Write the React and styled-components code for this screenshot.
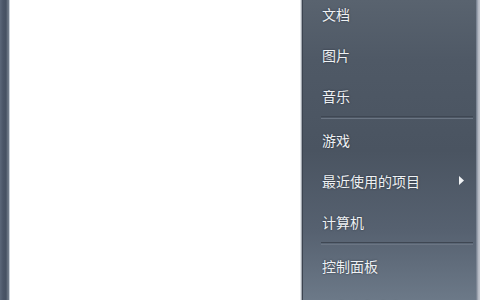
import React from "react";
import styled, { createGlobalStyle } from "styled-components";

const Global = createGlobalStyle`
  html, body { margin: 0; padding: 0; width: 480px; height: 300px; overflow: hidden; background: #ffffff; }
  #root { width: 480px; height: 300px; }
`;

const Frame = styled.div`
  display: flex;
  width: 480px;
  height: 300px;
  overflow: hidden;
`;

const LeftStrip = styled.div`
  width: 9px;
  flex: none;
  background: linear-gradient(90deg, #5b6779 0px, #4b5668 3px, #465162 6px, #6f7a88 8px);
  border-right: 1px solid #c9d0d8;
`;

const WhitePanel = styled.div`
  flex: 1;
  background: #ffffff;
  border-right: 1px solid #a3a9b1;
  box-shadow: inset -1px 0 0 #e4e7ea;
`;

const DarkPanel = styled.div`
  width: 173px;
  flex: none;
  border-left: 1px solid #3c4450;
  background: linear-gradient(180deg, #59636f 0px, #4f5966 60px, #4a5461 150px, #566170 230px, #6c7988 300px);
  overflow: hidden;
`;

const RightEdge = styled.div`
  width: 4px;
  flex: none;
  background: linear-gradient(90deg, #6e7888 0px, #8a93a0 1px, #aab0bb 2px, #bfc3cc 3px);
`;

const Menu = styled.ul`
  list-style: none;
  margin: -7px 0 0 0;
  padding: 0;
`;

const Item = styled.li`
  height: 41px;
  display: flex;
  align-items: center;
  justify-content: space-between;
  padding: 0 12px 0 19px;
  font-family: "Noto Sans CJK SC", "Noto Sans", sans-serif;
  font-size: 14px;
  color: #eef1f4;
  text-shadow: 0 0 2px rgba(20, 26, 34, 0.7);
  white-space: nowrap;
`;

const Separator = styled.li`
  height: 3px;
  margin: 0 3px 0 18px;
  box-sizing: border-box;
  border-top: 1px solid #3f4753;
  border-bottom: 1px solid #6b7583;
`;

const Arrow = () => (
  <svg width="5" height="9" viewBox="0 0 5 9">
    <path d="M0 0 L5 4.5 L0 9 Z" fill="#f2f4f6" />
  </svg>
);

const groups = [
  [{ label: "文档" }, { label: "图片" }, { label: "音乐" }],
  [{ label: "游戏" }, { label: "最近使用的项目", sub: true }, { label: "计算机" }],
  [{ label: "控制面板" }, { label: "设备和打印机" }],
];

export default function App() {
  return (
    <>
      <Global />
      <Frame>
        <LeftStrip />
        <WhitePanel />
        <DarkPanel>
          <Menu>
            {groups.map((g, gi) => (
              <React.Fragment key={gi}>
                {gi > 0 && <Separator />}
                {g.map((it) => (
                  <Item key={it.label}>
                    <span>{it.label}</span>
                    {it.sub && <Arrow />}
                  </Item>
                ))}
              </React.Fragment>
            ))}
          </Menu>
        </DarkPanel>
        <RightEdge />
      </Frame>
    </>
  );
}
